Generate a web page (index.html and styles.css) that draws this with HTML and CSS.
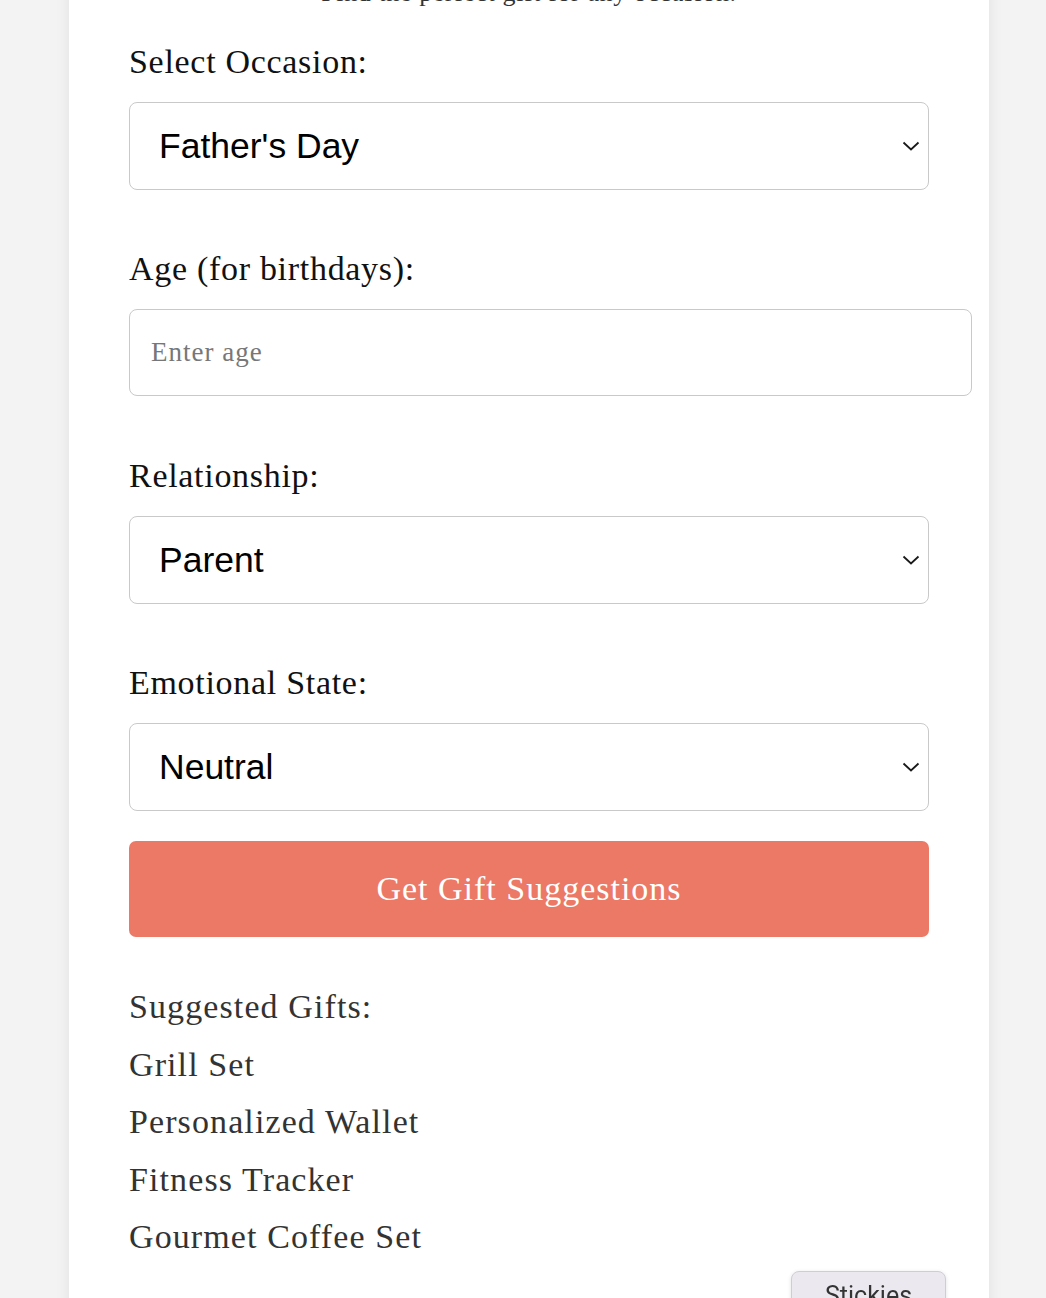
FILE: index.html
```html
<!DOCTYPE html>
<html lang="en">
<head>
<meta charset="utf-8">
<title>Gift Finder</title>
<link rel="stylesheet" href="styles.css">
</head>
<body>
<main class="card">
  <p class="subtitle">Find the perfect gift for any occasion.</p>

  <label class="label" for="occasion">Select Occasion:</label>
  <div class="select-wrap">
    <select id="occasion" class="select">
      <option>Father's Day</option>
    </select>
    <svg class="chev" width="18" height="10" viewBox="0 0 18 10"><path d="M1.5 1.5 L9 8.5 L16.5 1.5" fill="none" stroke="#1a1a1a" stroke-width="1.8"/></svg>
  </div>

  <label class="label" for="age">Age (for birthdays):</label>
  <input id="age" class="input" type="text" placeholder="Enter age">

  <label class="label" for="rel">Relationship:</label>
  <div class="select-wrap">
    <select id="rel" class="select">
      <option>Parent</option>
    </select>
    <svg class="chev" width="18" height="10" viewBox="0 0 18 10"><path d="M1.5 1.5 L9 8.5 L16.5 1.5" fill="none" stroke="#1a1a1a" stroke-width="1.8"/></svg>
  </div>

  <label class="label" for="emo">Emotional State:</label>
  <div class="select-wrap last">
    <select id="emo" class="select">
      <option>Neutral</option>
    </select>
    <svg class="chev" width="18" height="10" viewBox="0 0 18 10"><path d="M1.5 1.5 L9 8.5 L16.5 1.5" fill="none" stroke="#1a1a1a" stroke-width="1.8"/></svg>
  </div>

  <button class="btn" type="button">Get Gift Suggestions</button>

  <div class="results">
    <p class="result-title">Suggested Gifts:</p>
    <ul class="gifts">
      <li>Grill Set</li>
      <li>Personalized Wallet</li>
      <li>Fitness Tracker</li>
      <li>Gourmet Coffee Set</li>
    </ul>
  </div>
</main>
<button class="stickies" type="button">Stickies</button>
</body>
</html>
```

FILE: styles.css
```css
html, body {
  margin: 0;
  padding: 0;
}
body {
  background: #f3f3f3;
  font-family: "Liberation Serif", "Times New Roman", serif;
  color: #111;
  overflow: hidden;
}
.card {
  width: 800px;
  margin: -40px 0 0 69px;
  padding: 18px 60px 200px;
  background: #fff;
  box-shadow: 0 0 14px rgba(0, 0, 0, 0.08);
}
.subtitle {
  margin: 0;
  font-size: 26px;
  line-height: 30px;
  letter-spacing: 0.6px;
  text-align: center;
  color: #333;
}
.label {
  display: block;
  font-size: 34px;
  line-height: 38px;
  letter-spacing: 0.7px;
  color: #111;
  margin: 0 0 21px;
}
.subtitle + .label {
  margin-top: 35px;
}
.select-wrap {
  position: relative;
  margin-bottom: 60px;
}
.select-wrap.last {
  margin-bottom: 30px;
}
.select {
  display: block;
  width: 100%;
  height: 88px;
  box-sizing: border-box;
  appearance: none;
  -webkit-appearance: none;
  background: #fff;
  border: 1.5px solid #c9c9c9;
  border-radius: 8px;
  padding: 0 40px 0 29px;
  font-family: "Liberation Sans", Arial, sans-serif;
  font-size: 35.5px;
  color: #000;
}
.chev {
  position: absolute;
  right: 9px;
  top: 39px;
  pointer-events: none;
}
.input {
  display: block;
  width: 843px;
  height: 87px;
  box-sizing: border-box;
  padding: 0 20px 0 21px;
  border: 1.5px solid #c9c9c9;
  border-radius: 8px;
  font-family: "Liberation Serif", "Times New Roman", serif;
  font-size: 27px;
  letter-spacing: 1px;
  color: #111;
  margin: 22px 0 61px;
  outline: none;
}
.label + .input {
  margin-top: 1px;
}
.input::placeholder {
  color: #777;
}
.btn {
  display: block;
  width: 100%;
  height: 96px;
  border: none;
  border-radius: 7px;
  background: #ec7866;
  color: #fff;
  font-family: "Liberation Serif", "Times New Roman", serif;
  font-size: 34px;
  letter-spacing: 1px;
  cursor: pointer;
}
.results {
  margin-top: 41px;
  color: #333;
  font-size: 34px;
  line-height: 57.5px;
  letter-spacing: 1.1px;
}
.result-title {
  margin: 0;
}
.gifts {
  list-style: none;
  margin: 0;
  padding: 0;
}
.stickies {
  position: fixed;
  right: 100px;
  bottom: -22px;
  width: 155px;
  height: 49px;
  box-sizing: border-box;
  background: #ebe9ef;
  border: 1px solid #cfcdd3;
  border-radius: 8px;
  box-shadow: 0 1px 4px rgba(0, 0, 0, 0.12);
  font-family: Roboto, "Liberation Sans", sans-serif;
  font-size: 25px;
  color: #333;
  padding: 0;
  line-height: 47px;
  text-align: center;
}
```
